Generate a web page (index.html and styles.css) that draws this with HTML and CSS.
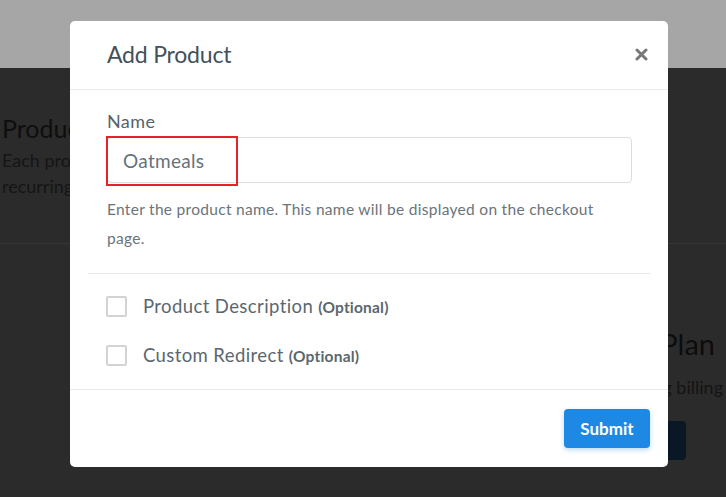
FILE: index.html
```html
<!DOCTYPE html>
<html lang="en">
<head>
<meta charset="utf-8">
<title>Add Product</title>
<link rel="stylesheet" href="styles.css">
</head>
<body>
<div class="page">
  <div class="topbar"></div>
  <section class="intro">
    <h2 class="intro-title">Products</h2>
    <p class="intro-text">Each product you create can be sold as a one-time or<br>recurring purchase on your checkout pages.</p>
  </section>
  <section class="lower">
    <div class="plan">
      <h2 class="plan-title">Subscription Plan</h2>
      <p class="plan-text">Set up recurring billing</p>
      <div class="plan-actions"><span class="plan-btn"></span></div>
    </div>
  </section>
</div>

<div class="modal" role="dialog" aria-labelledby="modal-title">
  <header class="modal-header">
    <h3 class="modal-title" id="modal-title">Add Product</h3>
    <span class="modal-close" aria-label="Close">
      <svg width="13" height="13" viewBox="0 0 13 13"><path d="M2 2 L11 11 M11 2 L2 11" stroke="#787878" stroke-width="3" stroke-linecap="round"/></svg>
    </span>
  </header>
  <div class="modal-body">
    <div class="form-group">
      <label class="field-label" for="name">Name</label>
      <div class="input-wrap">
        <input class="text-input" id="name" type="text" value="Oatmeals">
        <span class="highlight"></span>
      </div>
      <p class="help">Enter the product name. This name will be displayed on the checkout page.</p>
    </div>
    <div class="options">
      <label class="option"><span class="check"></span><span class="option-text">Product Description <small>(Optional)</small></span></label>
      <label class="option"><span class="check"></span><span class="option-text">Custom Redirect <small>(Optional)</small></span></label>
    </div>
  </div>
  <footer class="modal-footer">
    <button class="btn-submit" type="button">Submit</button>
  </footer>
</div>
</body>
</html>
```

FILE: styles.css
```css
* { box-sizing: border-box; }
html, body { margin: 0; padding: 0; }
body {
  width: 726px;
  height: 497px;
  overflow: hidden;
  font-family: Lato, "Open Sans", Arial, sans-serif;
  background: #2b2b2b;
  position: relative;
}
.page {
  height: 497px;
  background: #2b2b2b;
  color: #111;
}
.topbar {
  height: 68px;
  background: #a6a6a6;
}
.intro {
  padding: 45px 0 0 2px;
  height: 176px;
  border-bottom: 1px solid #363636;
}
.intro-title {
  margin: 0;
  font-size: 25px;
  font-weight: 400;
  line-height: 30px;
  color: #0e0e0e;
}
.intro-text {
  margin: 4px 0 0;
  font-size: 18px;
  line-height: 26px;
  color: #151515;
}
.lower {
  display: flex;
  justify-content: flex-end;
  padding-top: 83px;
}
.plan {
  display: flex;
  flex-direction: column;
  align-items: flex-end;
}
.plan-title {
  margin: 0 11px 0 0;
  font-size: 29px;
  font-weight: 400;
  line-height: 34px;
  color: #0d0d0d;
}
.plan-text {
  margin: 14px 3px 0 0;
  font-size: 18px;
  line-height: 24px;
  color: #141414;
}
.plan-actions { margin: 22px 40px 0 0; }
.plan-btn {
  display: block;
  width: 120px;
  height: 39px;
  border-radius: 4px;
  background: #0a1826;
}

.modal {
  position: absolute;
  top: 21px;
  left: 70px;
  width: 598px;
  height: 446px;
  background: #fff;
  border-radius: 5px;
  display: flex;
  flex-direction: column;
}
.modal-header {
  height: 69px;
  display: flex;
  align-items: center;
  justify-content: space-between;
  padding: 0 20px 0 37px;
  border-bottom: 1px solid #e9ecef;
}
.modal-title {
  margin: 0 0 2px;
  font-size: 23px;
  font-weight: 400;
  color: #43515a;
  letter-spacing: -0.2px;
}
.modal-close {
  display: flex;
  margin-top: -2px;
}
.modal-body {
  padding: 20px 18px 20px;
  border-bottom: 1px solid #e9ecef;
}
.form-group {
  padding: 0 18px 20px 19px;
  border-bottom: 1px solid #e6e6e6;
}
.field-label {
  display: block;
  font-size: 18px;
  letter-spacing: 0.4px;
  line-height: 22px;
  color: #56636b;
  margin-bottom: 5px;
}
.input-wrap { position: relative; }
.text-input {
  display: block;
  width: 100%;
  height: 46px;
  border: 1px solid #dcdcdc;
  border-radius: 4px;
  padding: 0 15px;
  font-family: inherit;
  font-size: 19px;
  letter-spacing: 0.3px;
  color: #66727a;
  background: #fff;
  outline: none;
}
.highlight {
  position: absolute;
  left: -1px;
  top: -1px;
  width: 132px;
  height: 50px;
  border: 2px solid #e8222a;
  pointer-events: none;
}
.help {
  margin: 12px 0 0;
  font-size: 15.5px;
  letter-spacing: 0.3px;
  line-height: 29px;
  color: #6b7479;
  padding-right: 20px;
}
.options {
  padding: 18px 19px 0;
  display: flex;
  flex-direction: column;
  gap: 21px;
}
.option {
  display: flex;
  align-items: center;
  height: 28px;
  gap: 16px;
  color: #5b676f;
  font-size: 18.5px;
  letter-spacing: 0.4px;
}
.check {
  width: 21px;
  height: 21px;
  border: 2px solid #d3d3d3;
  border-radius: 2px;
  flex: none;
  margin-left: -1px;
}
.option-text small {
  font-size: 15.5px;
  letter-spacing: 0.2px;
  font-weight: 700;
  color: #5b676f;
}
.modal-footer {
  flex: 1;
  display: flex;
  justify-content: flex-end;
  align-items: flex-start;
  padding: 19px 18px 0;
}
.btn-submit {
  width: 86px;
  height: 39px;
  border: none;
  border-radius: 4px;
  background: #1e88e5;
  color: #fff;
  font-family: inherit;
  font-size: 17px;
  font-weight: 700;
  box-shadow: 0 2px 5px rgba(30, 136, 229, 0.3);
}
```
